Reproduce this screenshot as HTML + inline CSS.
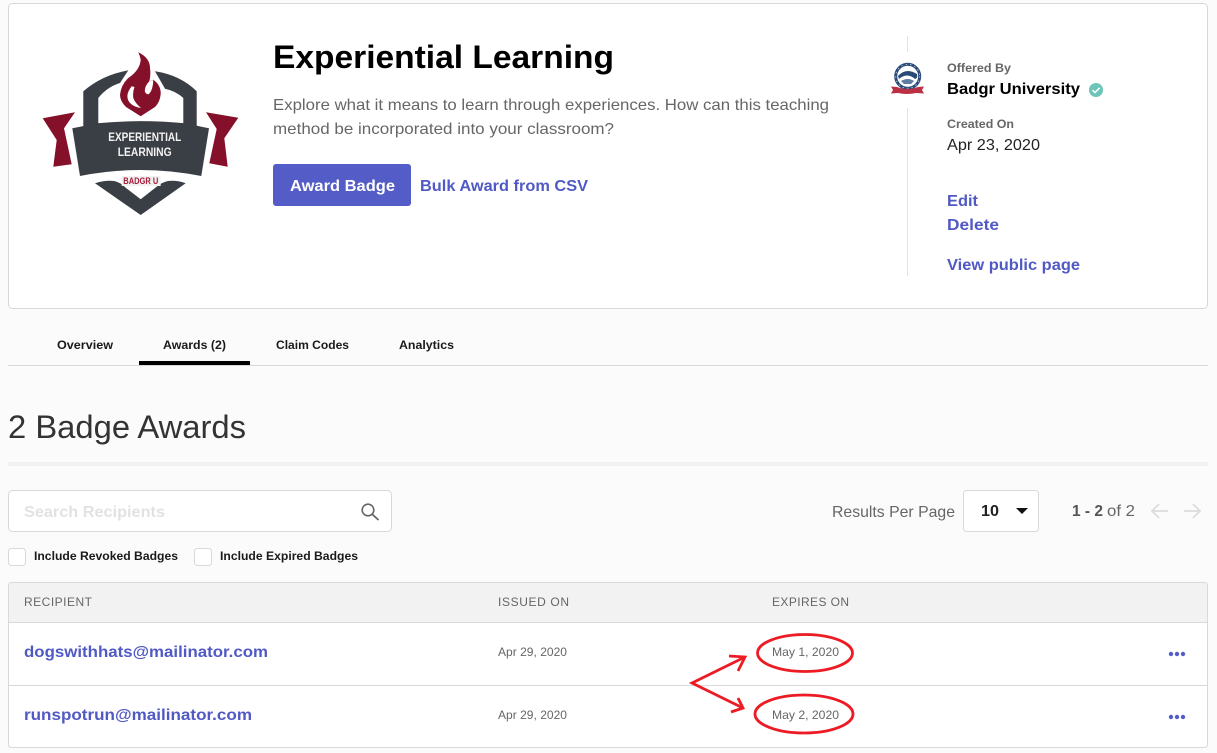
<!DOCTYPE html>
<html><head><meta charset="utf-8"><title>Experiential Learning</title>
<style>
html,body{margin:0;padding:0;background:#fbfbfb;width:1217px;height:753px;overflow:hidden}
svg{display:block;position:absolute;left:0;top:0}
text{font-family:"Liberation Sans",Arial,sans-serif}
.b{font-weight:700}
.lnk{fill:#5059c4;font-weight:700;font-size:16px}
.sm{font-size:12px;fill:#666}
.tab{font-size:12px;font-weight:700;fill:#1a1a1a}
.hd{font-size:12px;fill:#666}
</style></head><body>
<svg width="1217" height="753" viewBox="0 0 1217 753" xmlns="http://www.w3.org/2000/svg">
<rect x="8.5" y="3.5" width="1199" height="305" rx="4" fill="#fff" stroke="#d9d9d9"/>

<path fill="#85102a" d="M42.7 118.3L75 112.3L64 128.3L71.7 164.3L53.3 166.7L56.7 140Z"/>
<path fill="#85102a" d="M238.3 117.7L206 112.3L216.7 129L209.3 163.3L227.7 166.7L224.3 138.3Z"/>
<path fill="#3a3f46" d="M83.3 130V91.3Q102 75 128.3 70.3L120 83Q107 87 98.3 98V125Z"/>
<path fill="#3a3f46" d="M196.7 130V91.3Q180 75 155 71.3L165 88.7Q176 91 183.3 98V125Z"/>
<path fill="#3a3f46" d="M72.3 128.3L97.3 123.3Q140 119 185 123.3L209 128.3L201.3 176Q140 164 80 176Z"/>
<path fill="#3a3f46" d="M95 183.3Q105 180 114 181Q120 182 126 188L140.7 199.3L155 188Q162 182 168 181Q177 180 185.7 183.3L140.7 215Z"/>
<path fill="#85102a" d="M138.3 52.3Q150 58 150 68Q151 75 149.3 81.3L153.3 79.7Q161 85 160.7 94Q160 102 155 107L140.7 116.3L126 107Q120 101 120 94.7Q121 85 128.3 78Q140 70 140.7 59.7Q140 56 138.3 52.3Z"/>
<path fill="#fff" d="M131.7 86.3Q124 96 130 103Q134 107 141 108Q135 103 133.3 98Q132.5 92 134.5 87ZM149.3 81.3Q144 87 145 92Q147 95 149 94Q153 90 153.3 80Z"/>
<rect x="121.7" y="176" width="39" height="10" fill="#f1f1f1"/>
<text x="108.3" y="141" textLength="73" lengthAdjust="spacingAndGlyphs" class="b" font-size="11.5" fill="#f2f2f2">EXPERIENTIAL</text>
<text x="117.7" y="156" textLength="54" lengthAdjust="spacingAndGlyphs" class="b" font-size="11.5" fill="#f2f2f2">LEARNING</text>
<text x="123.3" y="184" textLength="35" lengthAdjust="spacingAndGlyphs" class="b" font-size="9.3" fill="#a81c3a">BADGR U</text>

<text x="273" y="68" textLength="341" lengthAdjust="spacingAndGlyphs" class="b" font-size="32" fill="#000">Experiential Learning</text>
<text x="273" y="110" textLength="556" lengthAdjust="spacingAndGlyphs" font-size="16" fill="#666">Explore what it means to learn through experiences. How can this teaching</text>
<text x="273" y="134" textLength="341" lengthAdjust="spacingAndGlyphs" font-size="16" fill="#666">method be incorporated into your classroom?</text>
<rect x="273" y="164" width="138" height="42" rx="3" fill="#545cc7"/>
<text x="290" y="191" textLength="105" lengthAdjust="spacingAndGlyphs" class="b" font-size="16" fill="#fff">Award Badge</text>
<text x="420" y="191" textLength="168" lengthAdjust="spacingAndGlyphs" class="lnk">Bulk Award from CSV</text>

<path d="M907.5 36V52M907.5 108V276" stroke="#e3e3e3" fill="none"/>
<circle cx="907.7" cy="76.3" r="12" fill="#fff" stroke="#2a4a78" stroke-width="3"/>
<circle cx="907.7" cy="76.3" r="12" fill="none" stroke="#a9bcd2" stroke-width="1" stroke-dasharray="1.5 3"/>
<path d="M898 76Q906 67 917 74Q918 78 915 79Q907 72 899 79Z" fill="#2a4a78"/>
<path d="M901 81Q908 77 914 81L911 84H904Z" fill="#5f7da3"/>
<path d="M891 86.5L897 87Q907 91 918 87L924 86.5L922 90L924 93.5L916 93Q907 95 898 93L891 93.5L893 90Z" fill="#bb3044"/>

<text x="947" y="72" textLength="64" lengthAdjust="spacingAndGlyphs" class="sm b">Offered By</text>
<text x="947" y="94" textLength="133" lengthAdjust="spacingAndGlyphs" class="b" font-size="16" fill="#000">Badgr University</text>
<circle cx="1096" cy="90" r="7" fill="#6cc5b8"/>
<path d="M1092.5 90.2L1095 92.6L1099.6 87.8" stroke="#fff" stroke-width="1.5" fill="none"/>
<text x="947" y="128" textLength="67" lengthAdjust="spacingAndGlyphs" class="sm b">Created On</text>
<text x="947" y="150" textLength="93" lengthAdjust="spacingAndGlyphs" font-size="16" fill="#222">Apr 23, 2020</text>
<text x="947" y="206" textLength="31" lengthAdjust="spacingAndGlyphs" class="lnk">Edit</text>
<text x="947" y="230" textLength="52" lengthAdjust="spacingAndGlyphs" class="lnk">Delete</text>
<text x="947" y="270" textLength="133" lengthAdjust="spacingAndGlyphs" class="lnk">View public page</text>

<text x="57" y="349" textLength="56" lengthAdjust="spacingAndGlyphs" class="tab">Overview</text>
<text x="163" y="349" textLength="63" lengthAdjust="spacingAndGlyphs" class="tab">Awards (2)</text>
<text x="276" y="349" textLength="73" lengthAdjust="spacingAndGlyphs" class="tab">Claim Codes</text>
<text x="399" y="349" textLength="55" lengthAdjust="spacingAndGlyphs" class="tab">Analytics</text>
<rect x="8" y="365" width="1200" height="1" fill="#d9d9d9"/>
<rect x="139" y="361" width="111" height="4" fill="#000"/>

<text x="8" y="438" textLength="238" lengthAdjust="spacingAndGlyphs" font-size="32" fill="#333">2 Badge Awards</text>
<rect x="8" y="462" width="1200" height="4" fill="#f1f1f1"/>

<rect x="8.5" y="490.5" width="383" height="41" rx="4" fill="#fff" stroke="#d9d9d9"/>
<text x="24" y="517" textLength="141" lengthAdjust="spacingAndGlyphs" class="b" font-size="16" fill="#e2e2e2">Search Recipients</text>
<circle cx="368" cy="510" r="5.8" fill="none" stroke="#666" stroke-width="1.6"/>
<path d="M372.5 514.5L378.5 520" stroke="#666" stroke-width="1.8" fill="none"/>

<rect x="8.5" y="548.5" width="17" height="17" rx="3" fill="#fff" stroke="#d9d9d9"/>
<text x="34" y="560" textLength="144" lengthAdjust="spacingAndGlyphs" class="tab">Include Revoked Badges</text>
<rect x="194.5" y="548.5" width="17" height="17" rx="3" fill="#fff" stroke="#d9d9d9"/>
<text x="220" y="560" textLength="138" lengthAdjust="spacingAndGlyphs" class="tab">Include Expired Badges</text>

<text x="832" y="517" textLength="123" lengthAdjust="spacingAndGlyphs" font-size="16" fill="#666">Results Per Page</text>
<rect x="963.5" y="490.5" width="75" height="41" rx="3" fill="#fff" stroke="#d9d9d9"/>
<text x="981" y="516" textLength="18" lengthAdjust="spacingAndGlyphs" class="b" font-size="16" fill="#222">10</text>
<path d="M1016 508H1028L1022 514Z" fill="#111"/>
<text x="1072" y="516" textLength="31" lengthAdjust="spacingAndGlyphs" class="b" font-size="16" fill="#555">1 - 2</text>
<text x="1107" y="516" textLength="28" lengthAdjust="spacingAndGlyphs" font-size="16" fill="#666">of 2</text>
<path d="M1168 511H1152M1159 504L1152 511L1159 518M1184 511H1200M1193 504L1200 511L1193 518" fill="none" stroke="#dcdcdc" stroke-width="1.8"/>

<rect x="8.5" y="582.5" width="1199" height="165" rx="3" fill="#fff" stroke="#d9d9d9"/>
<path d="M9 622V586Q9 583 12 583H1204Q1207 583 1207 586V622Z" fill="#f2f2f2"/>
<rect x="8" y="622" width="1200" height="1" fill="#d9d9d9"/>
<rect x="8" y="685" width="1200" height="1" fill="#d9d9d9"/>
<text x="24" y="606" textLength="68" lengthAdjust="spacing" class="hd">RECIPIENT</text>
<text x="498" y="606" textLength="71" lengthAdjust="spacing" class="hd">ISSUED ON</text>
<text x="772" y="606" textLength="77" lengthAdjust="spacing" class="hd">EXPIRES ON</text>

<text x="24" y="657" textLength="244" lengthAdjust="spacingAndGlyphs" class="lnk">dogswithhats@mailinator.com</text>
<text x="24" y="720" textLength="228" lengthAdjust="spacingAndGlyphs" class="lnk">runspotrun@mailinator.com</text>
<text x="498" y="656" textLength="69" lengthAdjust="spacingAndGlyphs" class="sm">Apr 29, 2020</text>
<text x="498" y="719" textLength="69" lengthAdjust="spacingAndGlyphs" class="sm">Apr 29, 2020</text>
<text x="772" y="656" textLength="67" lengthAdjust="spacingAndGlyphs" class="sm">May 1, 2020</text>
<text x="772" y="719" textLength="67" lengthAdjust="spacingAndGlyphs" class="sm">May 2, 2020</text>

<g fill="#545cc7">
<circle cx="1171" cy="654" r="2.2"/><circle cx="1177" cy="654" r="2.2"/><circle cx="1183" cy="654" r="2.2"/>
<circle cx="1171" cy="717" r="2.2"/><circle cx="1177" cy="717" r="2.2"/><circle cx="1183" cy="717" r="2.2"/>
</g>

<g fill="none" stroke="#ed1c24" stroke-width="2.8">
<ellipse cx="805" cy="653" rx="47.5" ry="18.5"/>
<ellipse cx="804" cy="714" rx="49" ry="19"/>
<path d="M729 656L745 657L738 671M745 657L692 683L743 708M738 698L743 708L731 712"/>
</g>
</svg>
</body></html>
